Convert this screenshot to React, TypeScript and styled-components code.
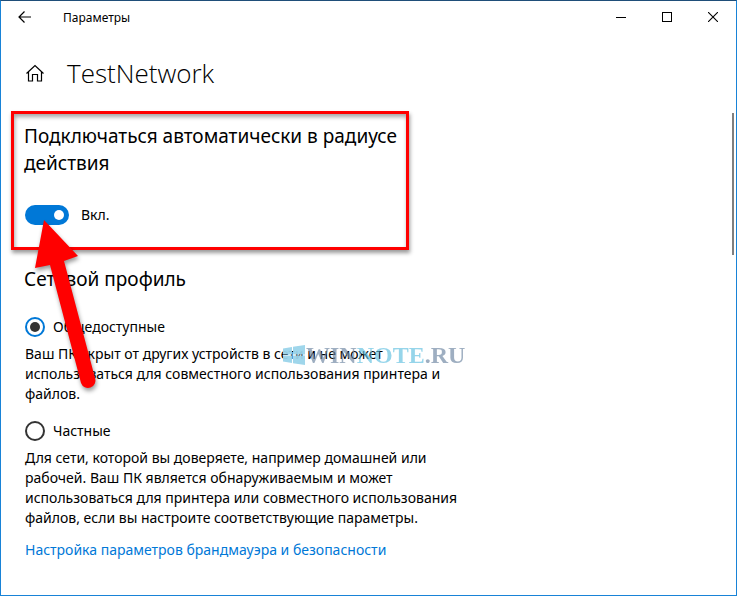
import React from "react";
import styled, { createGlobalStyle } from "styled-components";

const GlobalStyle = createGlobalStyle`
  *, *::before, *::after { box-sizing: border-box; }
  html, body, #root { height: 100%; }
  body {
    margin: 0;
    background: #fff;
    color: #000;
    font-family: "Noto Sans", "Open Sans", sans-serif;
    font-size: 14px;
    line-height: 20px;
  }
  h1, h2, p { margin: 0; font-weight: 400; }
`;

const Window = styled.div`
  min-height: 100%;
  display: flex;
  flex-direction: column;
  border: 1px solid #1883d7;
  border-top-color: #1f4e79;
`;

const TitleBar = styled.header`
  display: flex;
  align-items: center;
  height: 32px;
`;

const IconButton = styled.button<{ $width: number }>`
  width: ${(p) => p.$width}px;
  height: 32px;
  display: flex;
  align-items: center;
  justify-content: center;
  padding: 0;
  border: 0;
  background: transparent;
  color: #000;
`;

const AppName = styled.span`
  flex: 1;
  padding: 2px 0 0 14px;
  font-size: 12px;
`;

const PageHeader = styled.div`
  display: flex;
  align-items: center;
  gap: 16px;
  padding: 20px 18px 0;
`;

const PageTitle = styled.h1`
  font-family: "Open Sans", "Noto Sans", sans-serif;
  font-weight: 300;
  font-size: 26px;
  line-height: 40px;
`;

const Viewport = styled.div`
  flex: 1;
  display: flex;
  justify-content: space-between;
  align-items: flex-start;
  padding: 18px 2px 0 10px;
`;

const ScrollThumb = styled.div`
  width: 2px;
  height: 142px;
  margin-top: 2px;
  background: #7f7f7f;
`;

const Content = styled.main`
  flex: 0 1 460px;
`;

const Highlight = styled.section`
  position: relative;
  max-width: 398px;
  padding: 9px 8px 22px 10px;
  border: 3px solid #f00;
  box-shadow: 1px 3px 4px rgba(0, 0, 0, 0.4), inset 1px 3px 4px rgba(0, 0, 0, 0.35);
`;

const Heading = styled.h2`
  font-size: 19px;
  line-height: 27px;
`;

const ToggleLabel = styled.label`
  display: flex;
  align-items: center;
  gap: 12px;
  margin-top: 28px;
`;

const Toggle = styled.input`
  appearance: none;
  width: 44px;
  height: 20px;
  margin: 0 0 0 1px;
  display: flex;
  align-items: center;
  justify-content: flex-end;
  padding: 0 5px;
  border-radius: 10px;
  background: #0078d7;

  &::before {
    content: "";
    width: 10px;
    height: 10px;
    border-radius: 50%;
    background: #fff;
  }
  &:not(:checked) {
    justify-content: flex-start;
    background: #777;
  }
`;

const Arrow = styled.svg`
  position: absolute;
  left: 19px;
  top: 105px;
  z-index: 2;
  pointer-events: none;
  filter: drop-shadow(1px 3px 2px rgba(0, 0, 0, 0.4));
`;

const Profile = styled.section`
  padding: 16px 0 20px 13px;
`;

const Option = styled.div`
  position: relative;
  margin-top: 24px;

  & + & { margin-top: 17px; }
`;

const RadioLabel = styled.label`
  display: flex;
  align-items: center;
  gap: 8px;
  padding-left: 1px;
`;

const Radio = styled.input`
  appearance: none;
  width: 20px;
  height: 20px;
  margin: 0;
  display: grid;
  place-items: center;
  border: 2px solid #333;
  border-radius: 50%;

  &:checked { border-color: #0078d7; }
  &:checked::before {
    content: "";
    width: 10px;
    height: 10px;
    border-radius: 50%;
    background: #333;
  }
`;

const Description = styled.p`
  max-width: 442px;
  margin-top: 7px;
  padding-left: 1px;
`;

const Link = styled.a`
  display: inline-block;
  margin: 12px 0 0 1px;
  color: #0078d7;
  text-decoration: none;
`;

const Watermark = styled.div`
  position: absolute;
  left: 259px;
  top: 26px;
  display: flex;
  align-items: center;
  gap: 1px;
  pointer-events: none;
  white-space: nowrap;
  font: bold 24px/24px "Liberation Serif", serif;
`;

const WatermarkText = styled.span`
  color: #6b84a0;
  opacity: 0.65;
`;

const WatermarkAccent = styled.span`
  color: #5fbfe0;
`;

export default function App() {
  return (
    <>
      <GlobalStyle />
      <Window>
        <TitleBar>
          <IconButton $width={48} aria-label="Назад">
            <svg width="14" height="12" viewBox="0 0 14 12" fill="none" stroke="currentColor" strokeWidth="1.2">
              <path d="M6.5 .5 1 6l5.500 5.500M1 6h12" />
            </svg>
          </IconButton>
          <AppName>Параметры</AppName>
          <IconButton $width={46} aria-label="Свернуть">
            <svg width="10" height="10" shapeRendering="crispEdges"><path d="M0 5.500h10" stroke="currentColor" /></svg>
          </IconButton>
          <IconButton $width={46} aria-label="Развернуть">
            <svg width="10" height="10" shapeRendering="crispEdges"><path d="M.5 .5h9v9h-9z" fill="none" stroke="currentColor" /></svg>
          </IconButton>
          <IconButton $width={46} aria-label="Закрыть">
            <svg width="10" height="10"><path d="M0 0l10 10M10 0 0 10" stroke="currentColor" strokeWidth="1.1" /></svg>
          </IconButton>
        </TitleBar>
        <PageHeader>
          <IconButton $width={32} aria-label="Главная">
            <svg width="20" height="20" viewBox="0 0 20 20" fill="none" stroke="currentColor" strokeWidth="1.2">
              <path d="M1.500 10.500 10 2.500l8.500 8M3.500 9v9h4v-6.500h5V18h4V9" />
            </svg>
          </IconButton>
          <PageTitle>TestNetwork</PageTitle>
        </PageHeader>
        <Viewport>
          <Content>
            <Highlight>
              <Heading>Подключаться автоматически в радиусе действия</Heading>
              <ToggleLabel>
                <Toggle type="checkbox" role="switch" defaultChecked />
                Вкл.
              </ToggleLabel>
              <Arrow width="72" height="172" viewBox="0 0 72 172" fill="#f00" aria-hidden="true">
                <path d="M11 1 45 37 31 42 62 159A7 7 0 0 1 48 164L17 46 2 49Z" />
              </Arrow>
            </Highlight>
            <Profile>
              <Heading>Сетевой профиль</Heading>
              <Option>
                <RadioLabel>
                  <Radio type="radio" name="profile" defaultChecked />
                  Общедоступные
                </RadioLabel>
                <Description>
                  Ваш ПК скрыт от других устройств в сети и не может использоваться для совместного
                  использования принтера и файлов.
                </Description>
                <Watermark aria-hidden="true">
                  <svg width="22" height="20" viewBox="0 0 22 20" fill="#9ad4ea" opacity="0.95">
                    <path d="M0 3.500 9 2v7.500H0zM10 1.800 22 0v9.500H10zM0 10.500h9V18l-9-1.500zM10 10.500h12V20l-12-1.800z" />
                  </svg>
                  <WatermarkText>WIN<WatermarkAccent>NOTE</WatermarkAccent>.RU</WatermarkText>
                </Watermark>
              </Option>
              <Option>
                <RadioLabel>
                  <Radio type="radio" name="profile" />
                  Частные
                </RadioLabel>
                <Description>
                  Для сети, которой вы доверяете, например домашней или рабочей. Ваш ПК является
                  обнаруживаемым и может использоваться для принтера или совместного использования
                  файлов, если вы настроите соответствующие параметры.
                </Description>
              </Option>
              <Link href="#firewall">Настройка параметров брандмауэра и безопасности</Link>
            </Profile>
          </Content>
          <ScrollThumb />
        </Viewport>
      </Window>
    </>
  );
}
